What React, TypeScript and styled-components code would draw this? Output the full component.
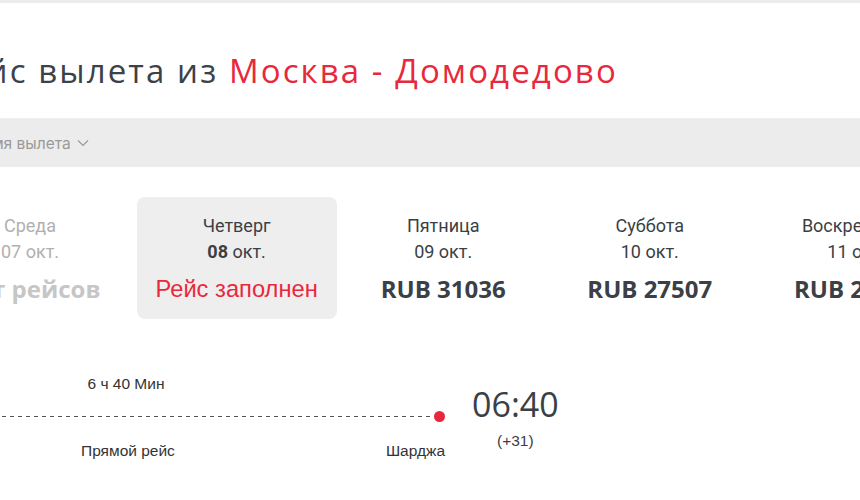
import React from "react";
import styled, { createGlobalStyle } from "styled-components";

const Global = createGlobalStyle`
  html, body { margin: 0; padding: 0; background: #fff; }
  body { width: 860px; height: 500px; overflow: hidden; font-family: "Open Sans", "Noto Sans", sans-serif; }
`;

const Page = styled.div`
  width: 860px;
  height: 500px;
  overflow: hidden;
  border-top: 3px solid #ececec;
  box-sizing: border-box;
`;

const Content = styled.div`
  margin-left: -70px;
  width: 1100px;
`;

const Title = styled.h1`
  margin: 0;
  padding: 46px 0 0 14px;
  height: 69px;
  box-sizing: content-box;
  font-family: "Open Sans", sans-serif;
  font-weight: 400;
  font-size: 33px;
  letter-spacing: 2.1px;
  line-height: 44px;
  color: #3b4249;
  white-space: nowrap;
  border-bottom: 1px solid #f0f0f0;
`;

const Red = styled.span`
  color: #e8293d;
`;

const FilterBar = styled.div`
  height: 48px;
  background: #ececec;
  display: flex;
  align-items: center;
  padding-left: 33px;
  font-family: "Inter", "Roboto", sans-serif;
  font-size: 15.5px;
  color: #9a9a9a;
  gap: 6px;
`;

const Dates = styled.div`
  display: grid;
  grid-template-columns: repeat(5, 200px);
  column-gap: 6.6px;
  margin-top: 30px;
`;

const DateCell = styled.div<{ $active?: boolean; $muted?: boolean }>`
  height: 122px;
  border-radius: 8px;
  background: ${(p) => (p.$active ? "#eeeeee" : "transparent")};
  display: flex;
  flex-direction: column;
  align-items: center;
  padding-top: 17px;
  box-sizing: border-box;
  font-family: "Roboto", sans-serif;
  font-size: 18px;
  color: ${(p) => (p.$muted ? "#b0b0b0" : "#3a3f44")};
`;

const DayName = styled.div`
  line-height: 24px;
`;

const DayDate = styled.div`
  line-height: 24px;
  margin-top: 2px;
  b { font-weight: 700; }
`;

const Price = styled.div<{ $muted?: boolean }>`
  margin-top: 9px;
  font-family: "Open Sans", sans-serif;
  font-weight: 700;
  font-size: 24px;
  line-height: 32px;
  color: ${(p) => (p.$muted ? "#c6c6c6" : "#3a4046")};
`;

const Full = styled.div`
  margin-top: 9px;
  font-family: "Liberation Sans", Arial, sans-serif;
  font-size: 23.7px;
  line-height: 32px;
  color: #e8293d;
`;

const Flight = styled.div`
  display: flex;
  align-items: flex-start;
  gap: 22px;
  margin-top: 56px;
`;

const Route = styled.div`
  width: 520px;
  display: flex;
  flex-direction: column;
  font-family: "Liberation Sans", Arial, sans-serif;
  font-size: 15.5px;
  color: #333;
`;

const Duration = styled.div`
  padding-right: 128px;
  text-align: center;
  line-height: 18px;
`;

const Line = styled.div`
  margin-top: 18px;
  height: 10px;
  margin-right: 5px;
  display: flex;
  align-items: center;
`;

const Dash = styled.div`
  flex: 1;
  height: 1px;
  background-image: linear-gradient(to right, #555 0 4px, transparent 4px 8px);
  background-size: 8px 1px;
`;

const Dot = styled.div`
  width: 11px;
  height: 11px;
  border-radius: 50%;
  background: #e6283f;
  flex: none;
`;

const Labels = styled.div`
  display: flex;
  margin-top: 21px;
  line-height: 18px;
`;

const Via = styled.div`
  flex: 1;
  text-align: center;
  padding-right: 60px;
`;

const City = styled.div`
  padding-right: 5px;
`;

const Time = styled.div`
  display: flex;
  flex-direction: column;
  align-items: center;
  margin-top: 7px;
`;

const Clock = styled.div`
  font-family: "Open Sans", sans-serif;
  font-size: 34px;
  line-height: 44px;
  color: #3a4046;
`;

const Shift = styled.div`
  font-family: "Liberation Sans", Arial, sans-serif;
  font-size: 15.5px;
  color: #3a4046;
  margin-top: 6px;
`;

const Chevron = () => (
  <svg width="12" height="8" viewBox="0 0 12 8" fill="none">
    <path d="M1 1.5l5 5 5-5" stroke="#9a9a9a" strokeWidth="1.2" />
  </svg>
);

export default function App() {
  const days = [
    { name: "Среда", day: "07", muted: true, price: "Нет рейсов" },
    { name: "Четверг", day: "08", active: true, full: true },
    { name: "Пятница", day: "09", price: "RUB 31036" },
    { name: "Суббота", day: "10", price: "RUB 27507" },
    { name: "Воскресенье", day: "11", price: "RUB 28000" },
  ];
  return (
    <Page>
      <Global />
      <Content>
        <Title>
          Рейс вылета из <Red>Москва - Домодедово</Red>
        </Title>
        <FilterBar>
          Время вылета <Chevron />
        </FilterBar>
        <Dates>
          {days.map((d) => (
            <DateCell key={d.name} $active={d.active} $muted={d.muted}>
              <DayName>{d.name}</DayName>
              <DayDate>
                {d.active ? <b>{d.day}</b> : d.day} окт.
              </DayDate>
              {d.full ? <Full>Рейс заполнен</Full> : <Price $muted={d.muted}>{d.price}</Price>}
            </DateCell>
          ))}
        </Dates>
        <Flight>
          <Route>
            <Duration>6 ч 40 Мин</Duration>
            <Line>
              <Dash />
              <Dot />
            </Line>
            <Labels>
              <Via>Прямой рейс</Via>
              <City>Шарджа</City>
            </Labels>
          </Route>
          <Time>
            <Clock>06:40</Clock>
            <Shift>(+31)</Shift>
          </Time>
        </Flight>
      </Content>
    </Page>
  );
}
